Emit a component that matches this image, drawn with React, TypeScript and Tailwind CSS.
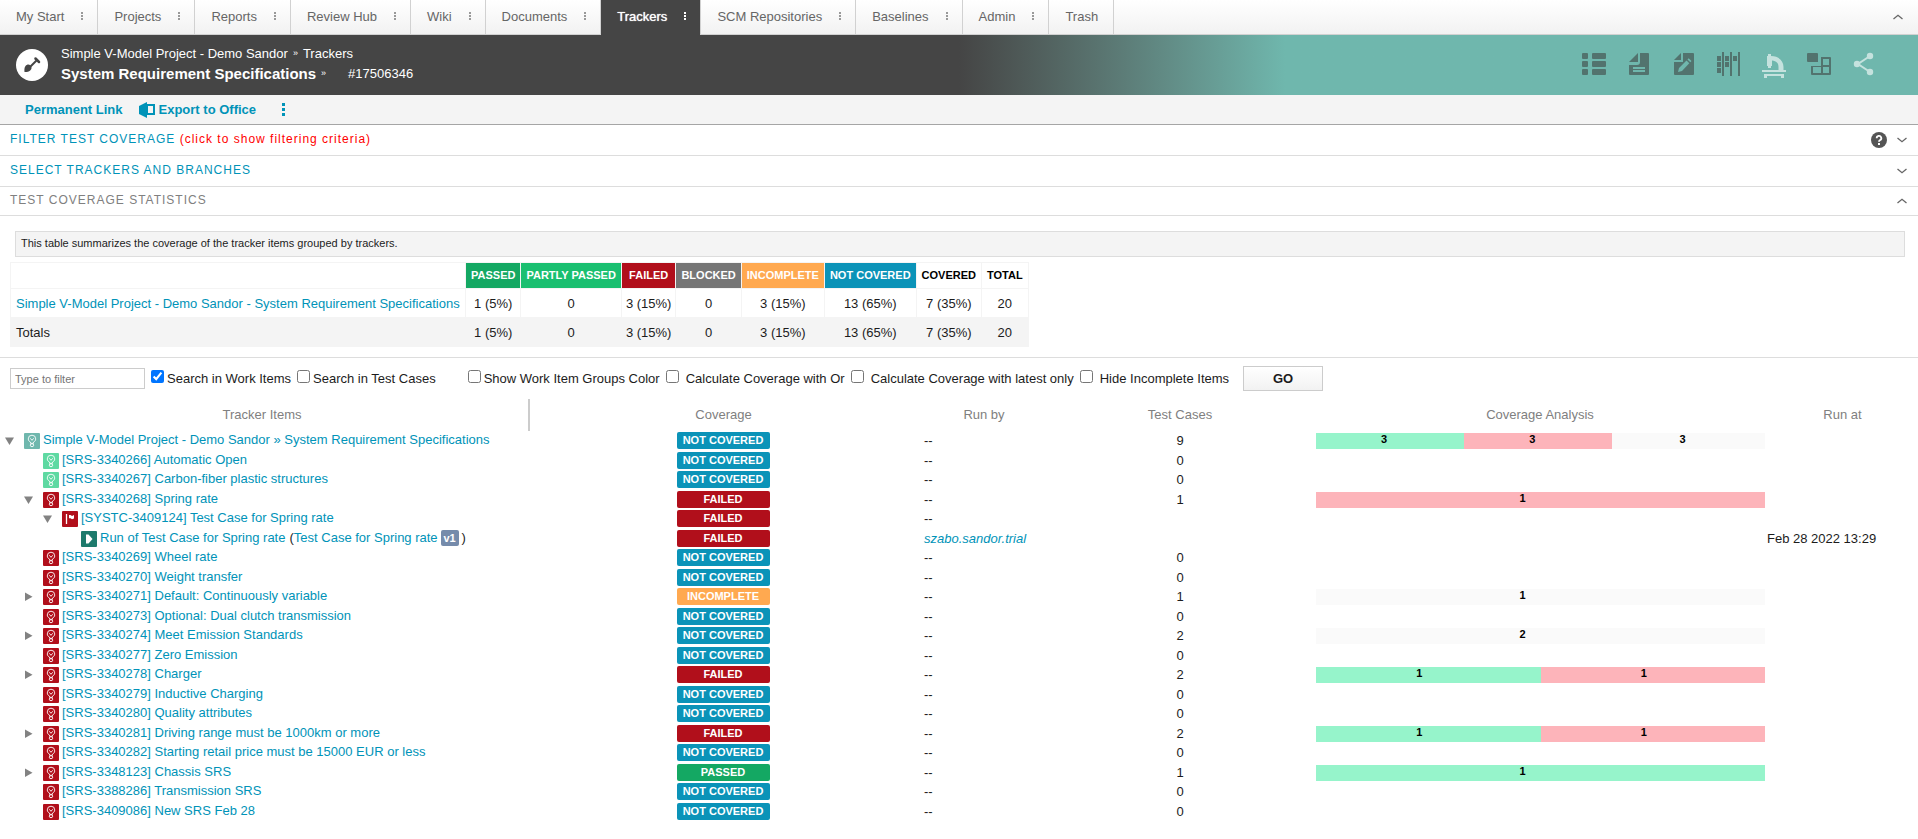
import React from "react";
import clsx from "clsx";

type Status = "NOT COVERED" | "FAILED" | "INCOMPLETE" | "PASSED";
type IconKind = "tracker" | "open" | "closed" | "case" | "run";

interface Segment {
  value: number;
  share: number;
  kind: "passed" | "failed" | "none";
}

interface TreeItem {
  title: string;
  level: number;
  icon: IconKind;
  toggle?: "open" | "closed";
  status: Status;
  runBy?: string;
  testCases?: number;
  segments?: Segment[];
  runAt?: string;
}

const tabs = [
  "My Start",
  "Projects",
  "Reports",
  "Review Hub",
  "Wiki",
  "Documents",
  "Trackers",
  "SCM Repositories",
  "Baselines",
  "Admin",
  "Trash",
];

const statColumns = [
  { label: "PASSED", head: "bg-[#14a863] text-white", value: "1 (5%)" },
  { label: "PARTLY PASSED", head: "bg-[#1abf70] text-white", value: "0" },
  { label: "FAILED", head: "bg-[#b10f1b] text-white", value: "3 (15%)" },
  { label: "BLOCKED", head: "bg-[#767676] text-white", value: "0" },
  { label: "INCOMPLETE", head: "bg-[#ffa950] text-white", value: "3 (15%)" },
  { label: "NOT COVERED", head: "bg-[#0b93b8] text-white", value: "13 (65%)" },
  { label: "COVERED", head: "text-black", value: "7 (35%)" },
  { label: "TOTAL", head: "text-black", value: "20" },
];

const half: Segment[] = [
  { value: 1, share: 50, kind: "passed" },
  { value: 1, share: 50, kind: "failed" },
];

const items: TreeItem[] = [
  {
    title: "Simple V-Model Project - Demo Sandor » System Requirement Specifications",
    level: 0,
    icon: "tracker",
    toggle: "open",
    status: "NOT COVERED",
    testCases: 9,
    segments: [
      { value: 3, share: 33, kind: "passed" },
      { value: 3, share: 33, kind: "failed" },
      { value: 3, share: 34, kind: "none" },
    ],
  },
  { title: "[SRS-3340266] Automatic Open", level: 1, icon: "open", status: "NOT COVERED", testCases: 0 },
  { title: "[SRS-3340267] Carbon-fiber plastic structures", level: 1, icon: "open", status: "NOT COVERED", testCases: 0 },
  {
    title: "[SRS-3340268] Spring rate",
    level: 1,
    icon: "closed",
    toggle: "open",
    status: "FAILED",
    testCases: 1,
    segments: [{ value: 1, share: 100, kind: "failed" }],
  },
  { title: "[SYSTC-3409124] Test Case for Spring rate", level: 2, icon: "case", toggle: "open", status: "FAILED" },
  {
    title: "Run of Test Case for Spring rate",
    level: 3,
    icon: "run",
    status: "FAILED",
    runBy: "szabo.sandor.trial",
    runAt: "Feb 28 2022 13:29",
  },
  { title: "[SRS-3340269] Wheel rate", level: 1, icon: "closed", status: "NOT COVERED", testCases: 0 },
  { title: "[SRS-3340270] Weight transfer", level: 1, icon: "closed", status: "NOT COVERED", testCases: 0 },
  {
    title: "[SRS-3340271] Default: Continuously variable",
    level: 1,
    icon: "closed",
    toggle: "closed",
    status: "INCOMPLETE",
    testCases: 1,
    segments: [{ value: 1, share: 100, kind: "none" }],
  },
  { title: "[SRS-3340273] Optional: Dual clutch transmission", level: 1, icon: "closed", status: "NOT COVERED", testCases: 0 },
  {
    title: "[SRS-3340274] Meet Emission Standards",
    level: 1,
    icon: "closed",
    toggle: "closed",
    status: "NOT COVERED",
    testCases: 2,
    segments: [{ value: 2, share: 100, kind: "none" }],
  },
  { title: "[SRS-3340277] Zero Emission", level: 1, icon: "closed", status: "NOT COVERED", testCases: 0 },
  {
    title: "[SRS-3340278] Charger",
    level: 1,
    icon: "closed",
    toggle: "closed",
    status: "FAILED",
    testCases: 2,
    segments: half,
  },
  { title: "[SRS-3340279] Inductive Charging", level: 1, icon: "closed", status: "NOT COVERED", testCases: 0 },
  { title: "[SRS-3340280] Quality attributes", level: 1, icon: "closed", status: "NOT COVERED", testCases: 0 },
  {
    title: "[SRS-3340281] Driving range must be 1000km or more",
    level: 1,
    icon: "closed",
    toggle: "closed",
    status: "FAILED",
    testCases: 2,
    segments: half,
  },
  { title: "[SRS-3340282] Starting retail price must be 15000 EUR or less", level: 1, icon: "closed", status: "NOT COVERED", testCases: 0 },
  {
    title: "[SRS-3348123] Chassis SRS",
    level: 1,
    icon: "closed",
    toggle: "closed",
    status: "PASSED",
    testCases: 1,
    segments: [{ value: 1, share: 100, kind: "passed" }],
  },
  { title: "[SRS-3388286] Transmission SRS", level: 1, icon: "closed", status: "NOT COVERED", testCases: 0 },
  { title: "[SRS-3409086] New SRS Feb 28", level: 1, icon: "closed", status: "NOT COVERED", testCases: 0 },
];

const statusColors: Record<Status, string> = {
  "NOT COVERED": "bg-[#0b93b8]",
  FAILED: "bg-[#b10f1b]",
  INCOMPLETE: "bg-[#ffa950]",
  PASSED: "bg-[#14a863]",
};

const segmentColors: Record<Segment["kind"], string> = {
  passed: "bg-[#96f4cb]",
  failed: "bg-[#fdb4ba]",
  none: "bg-[#fafafa]",
};

const iconColors: Record<IconKind, string> = {
  tracker: "bg-[#6fb7ad]",
  open: "bg-[#5ed9a2]",
  closed: "bg-[#b10f1b]",
  case: "bg-[#b10f1b]",
  run: "bg-[#1d7a6c]",
};

const indents = ["pl-1", "pl-[23px]", "pl-[42px]", "pl-[61px]"];

const Dots: React.FC = () => (
  <svg width="2" height="8" viewBox="0 0 2 8" fill="currentColor" shapeRendering="crispEdges">
    <rect width="2" height="2" />
    <rect y="3" width="2" height="2" />
    <rect y="6" width="2" height="2" />
  </svg>
);

const Chevron: React.FC<{ up?: boolean; label: string }> = ({ up, label }) => (
  <button aria-label={label} className="text-[#666]">
    <svg width="12" height="8" viewBox="0 0 12 8" fill="none" stroke="currentColor" strokeWidth="1.3">
      <path d={up ? "M1.500 6 L6 2.300 L10.500 6" : "M1.500 2 L6 5.700 L10.500 2"} />
    </svg>
  </button>
);

const ItemIcon: React.FC<{ kind: IconKind }> = ({ kind }) => (
  <span className={clsx("mt-px h-4 w-4 shrink-0 rounded-[1px] text-white", iconColors[kind])}>
    <svg width="16" height="16" viewBox="0 0 16 16" fill="none" stroke="currentColor">
      {kind === "case" && (
        <>
          <path d="M4.500 3v10" strokeWidth="1.300" />
          <path d="M7 4h1.500l1.500 1 2-1v3.500l-2 .8-1.500-1H7z" fill="currentColor" stroke="none" />
        </>
      )}
      {kind === "run" && <path d="M5 3.500h2.500l4 4.500-4 4.500h-2.500z" fill="currentColor" stroke="none" />}
      {kind !== "case" && kind !== "run" && (
        <>
          <path d="M6.500 10.300V9.200C5.200 8.500 4.300 7.300 4.300 5.900a3.700 3.700 0 0 1 7.400 0c0 1.400-.9 2.600-2.200 3.300v1.100z" strokeWidth="0.900" />
          <path d="M6.300 5.300L8 7.300l1.700-2" strokeWidth="0.900" />
          <ellipse cx="8" cy="12.200" rx="1.700" ry="1.500" strokeWidth="0.900" />
        </>
      )}
    </svg>
  </span>
);

const Toggle: React.FC<{ state?: "open" | "closed" }> = ({ state }) => {
  if (!state) return <span className="w-5 shrink-0" />;
  return (
    <button aria-label={state === "open" ? "Collapse" : "Expand"} className="flex h-[17px] w-5 shrink-0 items-center pl-px">
      <svg width="10" height="10" viewBox="0 0 10 10" fill="#828282">
        <path d={state === "open" ? "M0 1.500h9l-4.500 7.500z" : "M1 0.500v8.500l7.500-4.250z"} />
      </svg>
    </button>
  );
};

const CoverageBar: React.FC<{ segments: Segment[] }> = ({ segments }) => (
  <div className="mt-px flex h-4">
    {segments.map((segment, i) => (
      <div
        key={i}
        className={clsx("text-[11px] leading-[13px] font-bold text-black", segmentColors[segment.kind])}
        style={{ width: `${segment.share}%` }}
      >
        <div className="w-[92%] text-center">{segment.value}</div>
      </div>
    ))}
  </div>
);

const views = [
  {
    label: "Table view",
    icon: (
      <path d="M0 2q0-1 1-1h4q1 0 1 1v4q0 1-1 1h-4q-1 0-1-1zM0 10q0-1 1-1h4q1 0 1 1v4q0 1-1 1h-4q-1 0-1-1zM0 18q0-1 1-1h4q1 0 1 1v4q0 1-1 1h-4q-1 0-1-1zM10 2q0-1 1-1h12q1 0 1 1v4q0 1-1 1h-12q-1 0-1-1zM10 10q0-1 1-1h12q1 0 1 1v4q0 1-1 1h-12q-1 0-1-1zM10 18q0-1 1-1h12q1 0 1 1v4q0 1-1 1h-12q-1 0-1-1z" />
    ),
  },
  {
    label: "Document view",
    icon: (
      <>
        <path d="M2 10L11 1v9z" />
        <path fillRule="evenodd" d="M13 1h8q1 0 1 1v20q0 1-1 1H3q-1 0-1-1V13h8q3 0 3-3zM6 15v2h12v-2zM6 18v2h12v-2z" />
      </>
    ),
  },
  {
    label: "Document edit view",
    icon: (
      <>
        <path d="M2 8L9 1v7z" />
        <path fillRule="evenodd" d="M11 1h10q1 0 1 1v20q0 1-1 1H3q-1 0-1-1V10h9zM6 20l1-4 7.500-7.500 2.800 2.800L10 19zM15.500 7.500l1.200-1.200 2.800 2.800-1.200 1.200z" />
      </>
    ),
  },
  {
    label: "Kanban board",
    icon: (
      <path d="M5 0h2v24h-2zM13 0h2v24h-2zM21 0h2v24h-2zM0 4h4v5h-4zM0 10h4v5h-4zM0 16h4v5h-4zM8 4h4v5h-4zM8 10h4v5h-4zM16 4h4v5h-4z" />
    ),
  },
  {
    label: "Coverage browser",
    active: true,
    icon: (
      <path d="M5 4h1V2h3v2c8 0 12.500 5 12.500 11v3h-5v-3c0-4-2-6-6.500-6.500V14H9v2H6v-2H5zM0 18h24v2H0zM2 22h20v4h-3v-2H5v2H2z" />
    ),
  },
  {
    label: "Planner",
    icon: (
      <path fillRule="evenodd" d="M1 1h9q1 0 1 1v8h-10q-1 0-1-1v-7q0-1 1-1zM14 5h9q1 0 1 1v16q0 1-1 1H5q-1 0-1-1v-8h10zM16 7v6h6V7zM6 15v6h8v-6zM16 15v6h6v-6z" />
    ),
  },
  {
    label: "Traceability",
    active: true,
    icon: (
      <>
        <path d="M18 4L6 12l12 8" fill="none" stroke="currentColor" strokeWidth="2" />
        <circle cx="18" cy="4" r="3.200" />
        <circle cx="5" cy="12" r="3.200" />
        <circle cx="18" cy="20" r="3.200" />
      </>
    ),
  },
];

const Option: React.FC<{ label: string; checked?: boolean; wide?: boolean }> = ({ label, checked, wide }) => (
  <label className={clsx("flex items-center", wide ? "gap-[7px]" : "gap-[3px]")}>
    <input type="checkbox" defaultChecked={checked} className="mb-1 h-[13px] w-[13px]" />
    {label}
  </label>
);

const App: React.FC = () => {
  return (
    <div className="min-h-screen bg-white font-['Arial','Liberation_Sans',sans-serif] text-[13px] leading-[17px] text-[#1c1c1c]">
      <nav className="flex h-[35px] border-b border-[#d1d1d1] bg-linear-to-b from-white to-[#f2f2f2] text-[#666]">
        {tabs.map((tab) => {
          const active = tab === "Trackers";
          return (
            <div
              key={tab}
              className={clsx(
                "flex items-center border-r border-[#d1d1d1] pl-4",
                active ? "-mb-px bg-[#454545] pb-[3px] text-white" : "pb-[2px]"
              )}
            >
              <a href="#" className={clsx("whitespace-nowrap", active && "text-shadow-[0_0_1px_white]", tab === "Trash" && "pr-[15px]")}>
                {tab}
              </a>
              {tab !== "Trash" && (
                <button aria-label={`${tab} menu`} className={clsx("mr-[14px] ml-[17px]", !active && "text-[#999]")}>
                  <Dots />
                </button>
              )}
            </div>
          );
        })}
        <div className="ml-auto flex items-center pr-[14px]">
          <Chevron up label="Hide header" />
        </div>
      </nav>

      <header className="flex h-[60px] items-center bg-linear-to-r from-[#454545] from-50% to-[#6fb7ad] to-[67%] pr-[42px] pl-4 text-white">
        <svg width="32" height="32" viewBox="0 0 32 32">
          <circle cx="16" cy="16" r="16" fill="#fff" />
          <g fill="none" stroke="#454545">
            <path d="M13 19L21.500 10.500" strokeWidth="2" />
            <path d="M19.500 9.500l3.500 3.500" strokeWidth="2.500" strokeLinecap="round" />
          </g>
          <path d="M9.500 17c1.500-1.800 3.500-2 5-.5s1.500 3.500-.3 5c-1.500 1.300-3.500 1.600-5.700 1.500-.2-2.200-.2-4.500 1-6z" fill="#454545" />
        </svg>
        <div className="ml-[13px] pb-[3px]">
          <div className="flex h-5 items-center">
            <a href="#">Simple V-Model Project - Demo Sandor</a>
            <span className="mx-[5px] text-[9px] leading-[9px]">»</span>
            <a href="#">Trackers</a>
          </div>
          <div className="flex h-5 items-center">
            <h1 className="text-[15px] font-bold">System Requirement Specifications</h1>
            <span className="ml-[5px] text-[9px] leading-[9px]">»</span>
            <span className="ml-[22px]">#17506346</span>
          </div>
        </div>
        <div className="ml-auto flex gap-[21px]">
          {views.map((view) => (
            <button key={view.label} aria-label={view.label} className={view.active ? "text-[#c5e2de]" : "text-[#52736e]"}>
              <svg width="24" height="26" viewBox="0 0 24 26" fill="currentColor">
                {view.icon}
              </svg>
            </button>
          ))}
        </div>
      </header>

      <div className="flex h-[30px] items-center border-b border-[#a5a5a5] bg-[#f4f4f4] pl-[25px] font-bold text-[#0093b8]">
        <a href="#">Permanent Link</a>
        <a href="#" className="ml-4 flex items-center gap-1">
          <svg width="16" height="16" viewBox="0 0 16 16" fill="currentColor">
            <path fillRule="evenodd" d="M0 4L8 0v2h8v11H8v3L0 12zM9 4v7h5V4z" />
          </svg>
          Export to Office
        </a>
        <button aria-label="More actions" className="ml-[26px]">
          <svg width="3" height="13" viewBox="0 0 3 13" fill="currentColor">
            <path d="M0 0h3v3H0zM0 5h3v3H0zM0 10h3v3H0z" />
          </svg>
        </button>
      </div>

      <section className="flex h-[31px] items-center justify-between border-b border-[#ddd] px-[10px]">
        <h2 className="pb-[2px] text-[12px] tracking-[1px] text-[#0093b8]">
          FILTER TEST COVERAGE <span className="text-[#ff0000]">(click to show filtering criteria)</span>
        </h2>
        <div className="flex items-center gap-[9px]">
          <button aria-label="Help">
            <svg width="16" height="16" viewBox="0 0 16 16">
              <circle cx="8" cy="8" r="8" fill="#555" />
              <path d="M5.700 6.200a2.300 2.300 0 1 1 3.500 1.900c-.8.500-1.200.8-1.200 1.700" fill="none" stroke="#fff" strokeWidth="1.800" />
              <rect x="7" y="11" width="2" height="2" fill="#fff" />
            </svg>
          </button>
          <Chevron label="Show filter" />
        </div>
      </section>
      <section className="flex h-[31px] items-center justify-between border-b border-[#ddd] px-[10px]">
        <h2 className="pb-[2px] text-[12px] tracking-[1px] text-[#0093b8]">SELECT TRACKERS AND BRANCHES</h2>
        <Chevron label="Show trackers" />
      </section>
      <section className="flex h-[29px] items-center justify-between border-b border-[#ddd] px-[10px]">
        <h2 className="pb-[2px] text-[12px] tracking-[1px] text-[#808080]">TEST COVERAGE STATISTICS</h2>
        <Chevron up label="Hide statistics" />
      </section>

      <section className="border-b border-[#ddd] pt-[15px] pb-[10px]">
        <p className="mr-[13px] ml-[15px] border border-[#ddd] bg-[#f4f4f4] px-[5px] pt-[3px] pb-[4px] text-[11px]">
          This table summarizes the coverage of the tracker items grouped by trackers.
        </p>
        <table className="mt-[5px] ml-[10px] border-collapse text-center">
          <thead>
            <tr className="h-[26px] text-[11px]">
              <td className="w-[455px] border border-[#f4f4f4]" />
              {statColumns.map((column) => (
                <th key={column.label} className={clsx("border border-[#f4f4f4] px-[5px] font-bold whitespace-nowrap", column.head)}>
                  {column.label}
                </th>
              ))}
            </tr>
          </thead>
          <tbody>
            <tr className="h-[29px]">
              <td className="border border-[#f4f4f4] px-[5px] text-left whitespace-nowrap">
                <a href="#" className="text-[#0093b8]">
                  Simple V-Model Project - Demo Sandor - System Requirement Specifications
                </a>
              </td>
              {statColumns.map((column) => (
                <td key={column.label} className="border border-[#f4f4f4] px-1 whitespace-nowrap">
                  {column.value}
                </td>
              ))}
            </tr>
            <tr className="h-[29px] bg-[#f4f4f4]">
              <td className="border border-[#f4f4f4] px-[5px] text-left">Totals</td>
              {statColumns.map((column) => (
                <td key={column.label} className="border border-[#f4f4f4] px-1 whitespace-nowrap">
                  {column.value}
                </td>
              ))}
            </tr>
          </tbody>
        </table>
      </section>

      <form className="flex h-[41px] items-center gap-[6px] pl-[10px] whitespace-nowrap" onSubmit={(e) => e.preventDefault()}>
        <input
          type="text"
          aria-label="Filter"
          placeholder="Type to filter"
          className="h-[21px] w-[135px] border border-[#ccc] px-1 text-[11px] placeholder:text-[#757575]"
        />
        <Option label="Search in Work Items" checked />
        <Option label="Search in Test Cases" />
        <div className="w-5" />
        <Option label="Show Work Item Groups Color" />
        <Option label="Calculate Coverage with Or" wide />
        <Option label="Calculate Coverage with latest only" wide />
        <Option label="Hide Incomplete Items" wide />
        <button className="ml-2 h-[25px] w-20 border border-[#ccc] bg-linear-to-b from-white to-[#f2f2f2] font-bold">GO</button>
      </form>

      <table className="w-full table-fixed">
        <colgroup>
          <col className="w-[529px]" />
          <col className="w-[388px]" />
          <col className="w-[134px]" />
          <col className="w-[258px]" />
          <col className="w-[458px]" />
          <col className="w-[151px]" />
        </colgroup>
        <thead>
          <tr className="h-8 text-[#808080]">
            <th className="border-r-2 border-[#ccc] pr-1 pb-[2px] font-normal">Tracker Items</th>
            <th className="pb-[2px] font-normal">Coverage</th>
            <th className="pb-[2px] font-normal">Run by</th>
            <th className="pb-[2px] font-normal">Test Cases</th>
            <th className="pb-[2px] pl-1 font-normal">Coverage Analysis</th>
            <th className="pb-[2px] font-normal">Run at</th>
          </tr>
        </thead>
        <tbody>
          {items.map((item) => (
            <tr key={item.title} className="h-[19px] align-top odd:h-5">
              <td className="pt-px">
                <div className={clsx("flex h-[17px] whitespace-nowrap", indents[item.level])}>
                  <Toggle state={item.toggle} />
                  <ItemIcon kind={item.icon} />
                  <a href="#" className="ml-[3px] leading-4 text-[#0093b8]">
                    {item.title}
                  </a>
                  {item.icon === "run" && (
                    <span className="ml-1 flex leading-4">
                      (
                      <a href="#" className="text-[#0093b8]">
                        Test Case for Spring rate
                      </a>
                      <span className="mx-[3px] h-4 w-[18px] rounded-[2px] bg-[#758bab] text-center text-[11px] font-bold text-white">v1</span>
                      )
                    </span>
                  )}
                </div>
              </td>
              <td className="pt-px">
                <div
                  className={clsx(
                    "mx-auto h-[17px] w-[93px] rounded-[2px] text-center text-[11px] leading-[17px] font-bold text-white",
                    statusColors[item.status]
                  )}
                >
                  {item.status}
                </div>
              </td>
              <td className="pt-px pl-[7px]">
                {item.runBy ? (
                  <a href="#" className="text-[#0093b8] italic">
                    {item.runBy}
                  </a>
                ) : (
                  "--"
                )}
              </td>
              <td className="pt-px text-center">{item.testCases}</td>
              <td className="pt-px pr-[2px] pl-[7px]">{item.segments && <CoverageBar segments={item.segments} />}</td>
              <td className="pt-px whitespace-nowrap">{item.runAt}</td>
            </tr>
          ))}
        </tbody>
      </table>
    </div>
  );
};

export default App;
